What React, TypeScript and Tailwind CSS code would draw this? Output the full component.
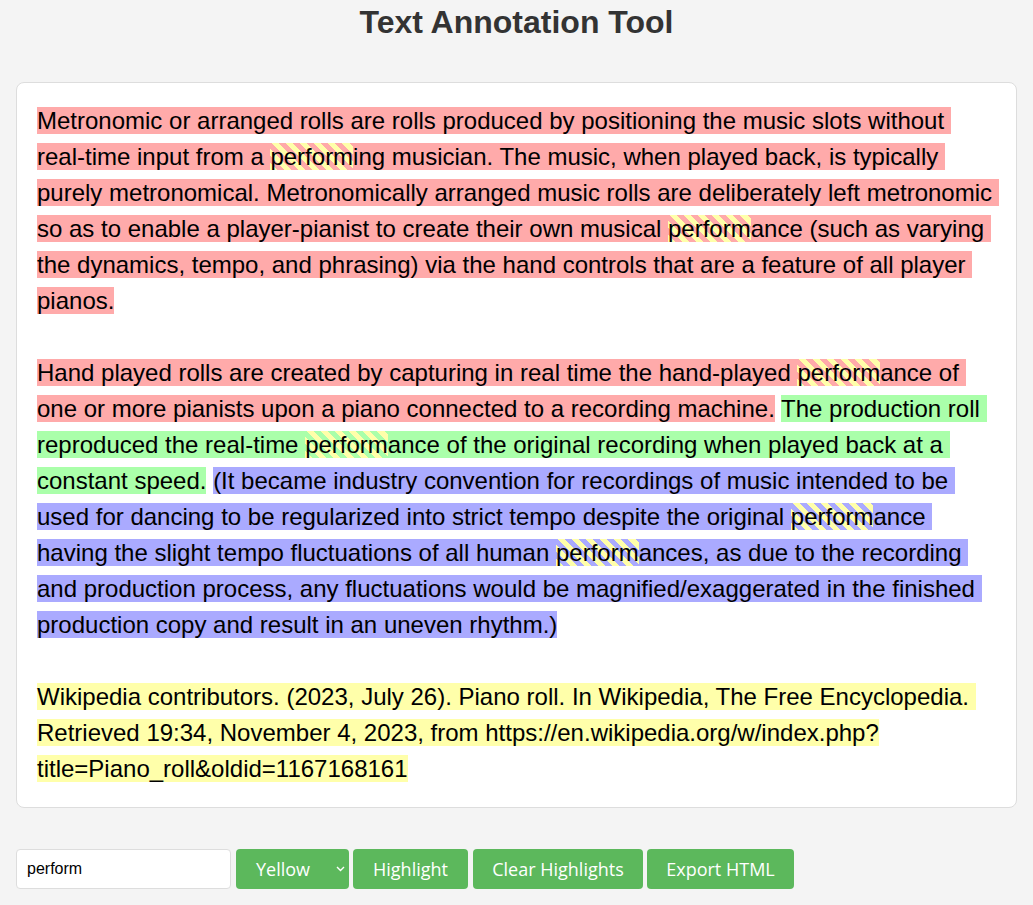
import React from 'react';

type Seg = { text: string; stripe?: boolean };

const stripeStyle =
  'bg-[repeating-linear-gradient(45deg,#ffffaa_0px,#ffffaa_5px,transparent_5px,transparent_10px)]';

// split a string on "perform" so the matches get the striped overlay
const mark = (text: string): Seg[] => {
  const out: Seg[] = [];
  const parts = text.split(/(perform)/g);
  parts.forEach((p) => {
    if (!p) return;
    out.push({ text: p, stripe: p === 'perform' });
  });
  return out;
};

const Hl: React.FC<{ color: string; text: string }> = ({ color, text }) => (
  <span className={color}>
    {mark(text).map((s, i) =>
      s.stripe ? (
        <span key={i} className={stripeStyle}>
          {s.text}
        </span>
      ) : (
        <React.Fragment key={i}>{s.text}</React.Fragment>
      )
    )}
  </span>
);

const btn =
  "h-10 rounded bg-[#5cb85c] text-[18px] text-white font-['Open_Sans',sans-serif]";

const App: React.FC = () => {
  return (
    <div className="min-h-screen bg-[#f4f4f4] px-4 pb-4 font-['Liberation_Sans',Arial,sans-serif]">
      <h1 className="pt-[2px] text-center text-[32px] font-bold leading-[40px] text-[#333]">
        Text Annotation Tool
      </h1>

      <div className="mt-10 whitespace-pre-wrap rounded-lg border border-[#dddddd] bg-white p-5 text-[24px] leading-9 text-black">
        <Hl
          color="bg-[#ffaaaa]"
          text="Metronomic or arranged rolls are rolls produced by positioning the music slots without real-time input from a performing musician. The music, when played back, is typically purely metronomical. Metronomically arranged music rolls are deliberately left metronomic so as to enable a player-pianist to create their own musical performance (such as varying the dynamics, tempo, and phrasing) via the hand controls that are a feature of all player pianos."
        />
        <br />
        <br />
        <Hl
          color="bg-[#ffaaaa]"
          text="Hand played rolls are created by capturing in real time the hand-played performance of one or more pianists upon a piano connected to a recording machine."
        />{' '}
        <Hl
          color="bg-[#aaffaa]"
          text="The production roll reproduced the real-time performance of the original recording when played back at a constant speed."
        />{' '}
        <Hl
          color="bg-[#aaaaff]"
          text="(It became industry convention for recordings of music intended to be used for dancing to be regularized into strict tempo despite the original performance having the slight tempo fluctuations of all human performances, as due to the recording and production process, any fluctuations would be magnified/exaggerated in the finished production copy and result in an uneven rhythm.)"
        />
        <br />
        <br />
        <Hl
          color="bg-[#ffffaa]"
          text="Wikipedia contributors. (2023, July 26). Piano roll. In Wikipedia, The Free Encyclopedia. Retrieved 19:34, November 4, 2023, from https://en.wikipedia.org/w/index.php?title=Piano_roll&oldid=1167168161"
        />
      </div>

      <div className="mt-[41px] flex items-center">
        <input
          defaultValue="perform"
          className="h-10 w-[215px] rounded border border-[#dddddd] bg-white px-[10px] text-base text-black outline-none font-['Liberation_Sans',Arial,sans-serif]"
        />
        <div className="relative ml-[5px] flex h-10 w-[113px] items-center rounded bg-[#5cb85c] pl-[20px] text-[18px] text-white font-['Open_Sans',sans-serif]">
          Yellow
          <svg
            className="absolute right-[4px] top-[17px]"
            width="9"
            height="6"
            viewBox="0 0 9 6"
            fill="none"
            stroke="white"
            strokeWidth="1.4"
          >
            <path d="M1 1l3.5 3.5L8 1" />
          </svg>
        </div>
        <button className={`${btn} ml-[4px] w-[115px]`}>Highlight</button>
        <button className={`${btn} ml-[5px] w-[170px]`}>Clear Highlights</button>
        <button className={`${btn} ml-[4px] w-[147px]`}>Export HTML</button>
      </div>
    </div>
  );
};

export default App;
